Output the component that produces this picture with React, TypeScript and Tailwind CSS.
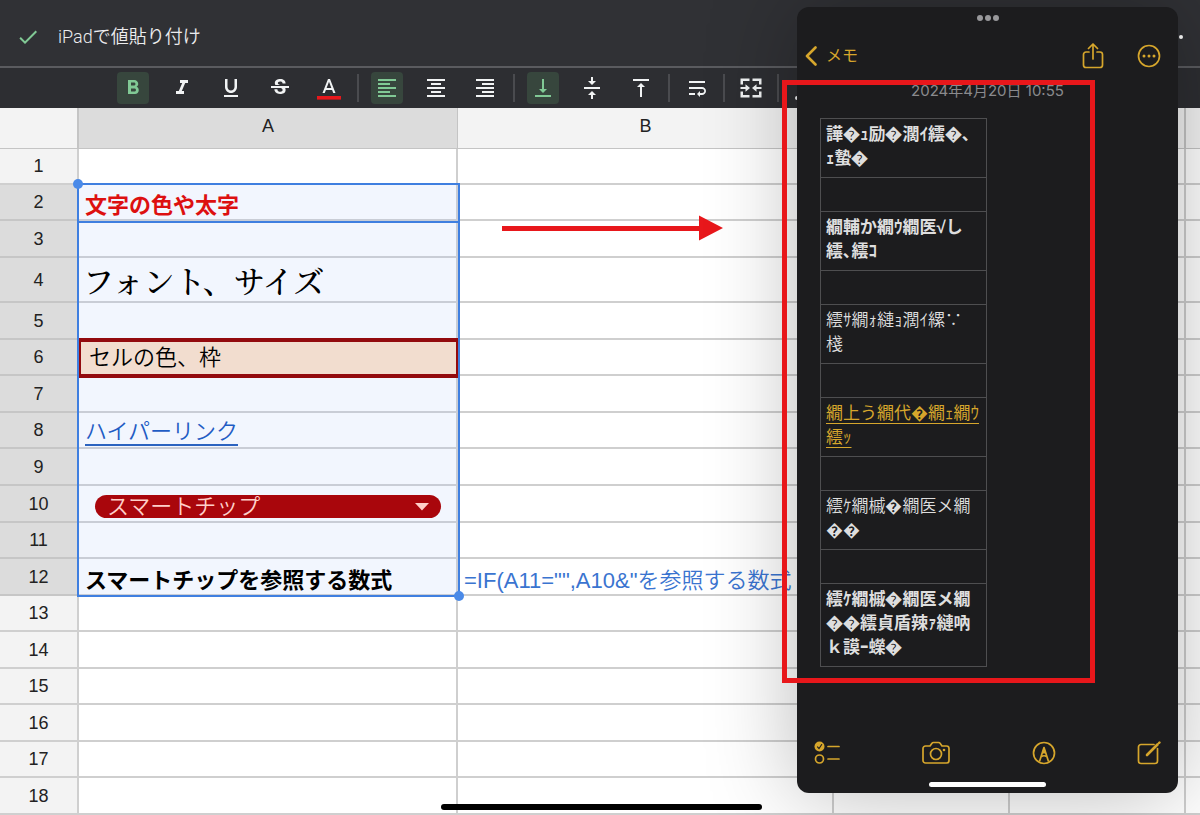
import type { ReactNode } from 'react';
import {
  MdCheck,
  MdFormatAlignCenter,
  MdFormatAlignLeft,
  MdFormatAlignRight,
  MdFormatBold,
  MdFormatItalic,
  MdFormatUnderlined,
  MdStrikethroughS,
  MdVerticalAlignBottom,
  MdVerticalAlignCenter,
  MdVerticalAlignTop,
  MdWrapText,
} from 'react-icons/md';

function ToolButton({ label, active, children }: { label: string; active?: boolean; children: ReactNode }) {
  return (
    <button
      type="button"
      aria-label={label}
      aria-pressed={active ?? false}
      className={
        active
          ? 'flex size-8 shrink-0 items-center justify-center rounded bg-[#37463d] text-[#81c995]'
          : 'flex size-8 shrink-0 items-center justify-center rounded text-[#f1f3f4]'
      }
    >
      {children}
    </button>
  );
}

function TextColorIcon() {
  return (
    <svg width="24" height="24" viewBox="0 0 24 24" fill="currentColor">
      <path d="M11 3 5.500 17h2.250l1.120-3h6.250l1.120 3h2.250L13 3h-2zm-1.380 9L12 5.670 14.380 12H9.620z" />
      <rect x="0" y="20" width="24" height="3.600" fill="#e8171b" />
    </svg>
  );
}

function MergeIcon() {
  return (
    <svg width="24" height="24" viewBox="0 0 24 24" fill="currentColor">
      <path d="M1.500 2.500h9v2.500h-6.500v3.500h-2.500zM22.500 2.500h-9v2.500h6.500v3.500h2.500zM1.500 21.500h9v-2.500h-6.500v-3.500h-2.500zM22.500 21.500h-9v-2.500h6.500v-3.500h2.500z" />
      <path d="M1.500 11h5V8.200l4.500 3.800-4.500 3.800V13h-5zM22.500 11h-5V8.200L13 12l4.500 3.800V13h5z" />
    </svg>
  );
}

function Toolbar() {
  return (
    <div role="toolbar" aria-label="書式" className="flex h-[42px] items-center border-t-2 border-[#5a5b5f] bg-[#2d2e32] pl-[117px]">
      <div className="flex gap-[17px]">
        <ToolButton label="太字" active><MdFormatBold size={24} /></ToolButton>
        <ToolButton label="斜体"><MdFormatItalic size={24} /></ToolButton>
        <ToolButton label="下線"><MdFormatUnderlined size={24} /></ToolButton>
        <ToolButton label="取り消し線"><MdStrikethroughS size={24} /></ToolButton>
        <ToolButton label="文字の色"><TextColorIcon /></ToolButton>
      </div>
      <span className="mx-3 h-7 w-0.5 bg-[#4a4b4f]" />
      <div className="flex gap-[17px]">
        <ToolButton label="左揃え" active><MdFormatAlignLeft size={24} /></ToolButton>
        <ToolButton label="中央揃え"><MdFormatAlignCenter size={24} /></ToolButton>
        <ToolButton label="右揃え"><MdFormatAlignRight size={24} /></ToolButton>
      </div>
      <span className="mx-3 h-7 w-0.5 bg-[#4a4b4f]" />
      <div className="flex gap-[17px]">
        <ToolButton label="下揃え" active><MdVerticalAlignBottom size={24} /></ToolButton>
        <ToolButton label="上下中央揃え"><MdVerticalAlignCenter size={24} /></ToolButton>
        <ToolButton label="上揃え"><MdVerticalAlignTop size={24} /></ToolButton>
      </div>
      <span className="mx-[11px] h-7 w-0.5 bg-[#4a4b4f]" />
      <ToolButton label="折り返し"><MdWrapText size={24} /></ToolButton>
      <span className="mx-[10px] h-7 w-0.5 bg-[#4a4b4f]" />
      <ToolButton label="セルを結合"><MergeIcon /></ToolButton>
      <span className="mx-[10px] h-7 w-0.5 bg-[#4a4b4f]" />
      <span className="mb-2 ml-1.5 size-1 self-end rounded-full bg-[#f1f3f4]" />
    </div>
  );
}

type Row = { n: number; height: string; cell?: ReactNode; formula?: string; framed?: boolean };

const rows: Row[] = [
  { n: 1, height: 'h-[36px]' },
  { n: 2, height: 'h-[36px]', cell: <span className="block pt-2 pl-1.5 text-[22px] leading-[26px] font-bold text-[#dd1010]">文字の色や太字</span> },
  { n: 3, height: 'h-[37px]' },
  {
    n: 4,
    height: 'h-[45px]',
    cell: <span className="block pl-1 font-['Noto_Serif_CJK_JP','Noto_Serif_JP','Noto_Sans_CJK_JP',serif] text-[31px] leading-10 font-medium text-black">フォント、サイズ</span>,
  },
  { n: 5, height: 'h-[37px]' },
  { n: 6, height: 'h-[36px]', framed: true, cell: <span className="block pl-2.5 text-[22px] leading-8 font-[350] text-black">セルの色、枠</span> },
  { n: 7, height: 'h-[37px]' },
  {
    n: 8,
    height: 'h-[36px]',
    cell: (
      <a href="#link" className="mt-1.5 ml-1.5 block w-fit border-b-2 border-[#2b63c0] text-[22px] leading-6 font-[350] text-[#1f5cc4]">
        ハイパーリンク
      </a>
    ),
  },
  { n: 9, height: 'h-[37px]' },
  {
    n: 10,
    height: 'h-[37px]',
    cell: (
      <div className="mt-1.5 mr-[15px] ml-4 grid items-center">
        <select
          aria-label="スマートチップ"
          className="col-start-1 row-start-1 h-[23px] w-full appearance-none rounded-full bg-[#a9060c] pl-3 text-[22px] leading-[22px] font-[350] text-[#ffcfc9]"
        >
          <option>スマートチップ</option>
        </select>
        <svg width="14" height="8" viewBox="0 0 14 8" className="pointer-events-none col-start-1 row-start-1 mr-3 justify-self-end fill-[#ffcfc9]">
          <path d="M0 0h14L7 7.500z" />
        </svg>
      </div>
    ),
  },
  { n: 11, height: 'h-[36px]' },
  {
    n: 12,
    height: 'h-[37px]',
    cell: <span className="block pt-2 pl-1.5 text-[22px] leading-[26px] font-bold text-black">スマートチップを参照する数式</span>,
    formula: '=IF(A11="",A10&"を参照する数式',
  },
  { n: 13, height: 'h-[36px]' },
  { n: 14, height: 'h-[37px]' },
  { n: 15, height: 'h-[36px]' },
  { n: 16, height: 'h-[37px]' },
  { n: 17, height: 'h-[36px]' },
  { n: 18, height: 'h-[37px]' },
];

function Sheet() {
  return (
    <div className="relative">
      <table className="w-full table-fixed border-separate border-spacing-0 bg-white">
        <colgroup>
          <col className="w-[79px]" />
          <col className="w-[379px]" />
          <col className="w-[376px]" />
          <col className="w-[176px]" />
          <col className="w-[176px]" />
          <col />
        </colgroup>
        <thead>
          <tr className="h-[41px] text-lg leading-5 text-[#222]">
            <td className="border-r-2 border-b border-[#c4c4c4] bg-[#f3f3f3] p-0" />
            <th scope="col" className="border-r border-b border-[#c4c4c4] bg-[#dcdcdc] p-0 pb-1 font-normal">A</th>
            <th scope="col" className="border-r border-b border-[#c4c4c4] bg-[#f3f3f3] p-0 pb-1 font-normal">B</th>
            <td className="border-r border-b border-[#c4c4c4] bg-[#f3f3f3] p-0" />
            <td className="border-r-2 border-b border-[#c4c4c4] bg-[#f3f3f3] p-0" />
            <td className="border-b border-[#c4c4c4] bg-[#f3f3f3] p-0" />
          </tr>
        </thead>
        <tbody>
          {rows.map((row) => {
            const selected = row.n >= 2 && row.n <= 12;
            return (
              <tr key={row.n} className={row.height}>
                <th
                  scope="row"
                  className={
                    selected
                      ? 'border-r-2 border-b-2 border-[#c6c6c6] bg-[#dcdcdc] p-0 text-lg leading-5 font-normal text-[#222]'
                      : 'border-r-2 border-b-2 border-[#cfcfcf] bg-[#f3f3f3] p-0 text-lg leading-5 font-normal text-[#222]'
                  }
                >
                  {row.n}
                </th>
                <td
                  className={
                    row.framed
                      ? 'bg-[#f2ddcf] p-0 outline-4 -outline-offset-2 outline-[#930a0e]'
                      : selected
                        ? 'border-r-2 border-b-2 border-[#c9cdd6] bg-[#f2f6fe] p-0'
                        : 'border-r-2 border-b-2 border-[#cfcfcf] p-0'
                  }
                >
                  {row.cell}
                </td>
                <td className="border-r-2 border-b-2 border-[#cfcfcf] p-0">
                  {row.formula && (
                    <span className="block overflow-hidden pt-2 pl-1.5 text-[22px] leading-[26px] font-[350] whitespace-nowrap text-[#3a74d0]">{row.formula}</span>
                  )}
                </td>
                <td className="border-r-2 border-b-2 border-[#cfcfcf] p-0" />
                <td className="border-r-2 border-b-2 border-[#cfcfcf] p-0" />
                <td className="border-b-2 border-[#cfcfcf] p-0" />
              </tr>
            );
          })}
        </tbody>
      </table>
      <div className="pointer-events-none absolute top-[75px] left-[77px] h-[414px] w-[383px] border-2 border-[#3f7fe0]">
        <div className="h-[38px] border-b-2 border-[#3f7fe0]" />
        <span className="absolute -top-1.5 -left-1.5 size-2.5 rounded-full bg-[#4a8ae8]" />
        <span className="absolute -right-1.5 -bottom-1.5 size-2.5 rounded-full bg-[#4a8ae8]" />
      </div>
    </div>
  );
}

const notes: { lines: string[]; style: string; link?: boolean }[] = [
  { lines: ['譁�ｭ励�濶ｲ繧�､', 'ｪ蟄�'], style: 'font-bold' },
  { lines: ['繝輔か繝ｳ繝医√し', '繧､繧ｺ'], style: 'font-bold' },
  { lines: ['繧ｻ繝ｫ縺ｮ濶ｲ縲∵', '棧'], style: 'font-[350]' },
  { lines: ['繝上う繝代�繝ｪ繝ｳ', '繧ｯ'], style: 'font-normal', link: true },
  { lines: ['繧ｹ繝槭�繝医メ繝', '��'], style: 'font-[350]' },
  { lines: ['繧ｹ繝槭�繝医メ繝', '��繧貞盾辣ｧ縺吶', 'ｋ謨ｰ蠑�'], style: 'font-bold' },
];

function NoteTable() {
  return (
    <table className="ml-[23px] w-[167px] border-collapse text-[17px] leading-6 text-[#dedede]">
      <tbody>
        {notes.map((note, i) => {
          const text = note.lines.map((line) => <span key={line} className="block whitespace-nowrap">{line}</span>);
          return [
            i > 0 && (
              <tr key={`gap-${i}`} className="h-[34px]">
                <td className="border border-[#4e4e50]" />
              </tr>
            ),
            <tr key={`note-${i}`}>
              <td className="border border-[#4e4e50] px-[5px] pt-1 pb-1.5 last:pb-1.5">
                {note.link ? (
                  <a href="#note" className="block text-[#d6a62c] underline decoration-1 underline-offset-4">{text}</a>
                ) : (
                  <div className={note.style}>{text}</div>
                )}
              </td>
            </tr>,
          ];
        })}
      </tbody>
    </table>
  );
}

function NotesWindow() {
  return (
    <section
      aria-label="メモ"
      className="absolute top-[7px] left-[797px] flex h-[786px] w-[381px] flex-col rounded-xl bg-[#1c1c1e] shadow-[0_0_90px_rgba(0,0,0,0.28)]"
    >
      <button type="button" aria-label="マルチタスク" className="mx-auto mt-[7px] flex h-2 items-center gap-0.5">
        <span className="size-1.5 rounded-full bg-[#98989b]" />
        <span className="size-1.5 rounded-full bg-[#98989b]" />
        <span className="size-1.5 rounded-full bg-[#98989b]" />
      </button>
      <header className="mt-4 flex h-9 items-center pr-[17px] pl-2 text-[#d6a62c]">
        <button type="button" className="flex items-center gap-2 text-base">
          <svg width="13" height="20" viewBox="0 0 13 20" fill="none" stroke="currentColor" strokeWidth="2.600" strokeLinecap="round" strokeLinejoin="round">
            <path d="M10.500 1.500 2 10l8.500 8.500" />
          </svg>
          メモ
        </button>
        <button type="button" aria-label="共有" className="ml-auto">
          <svg width="22" height="26" viewBox="0 0 22 26" fill="none" stroke="currentColor" strokeWidth="1.700" strokeLinecap="round" strokeLinejoin="round">
            <path d="M7 9H4a2.500 2.500 0 0 0-2.500 2.500v10.500A2.500 2.500 0 0 0 4 24.500h14a2.500 2.500 0 0 0 2.500-2.500V11.500A2.500 2.500 0 0 0 18 9h-3M11 16V1.500M6.500 5.500 11 1l4.500 4.500" />
          </svg>
        </button>
        <button type="button" aria-label="その他" className="ml-[33px]">
          <svg width="24" height="24" viewBox="0 0 24 24" fill="none" stroke="currentColor" strokeWidth="1.700">
            <circle cx="12" cy="12" r="10.500" />
            <g fill="currentColor" stroke="none">
              <circle cx="7" cy="12" r="1.500" />
              <circle cx="12" cy="12" r="1.500" />
              <circle cx="17" cy="12" r="1.500" />
            </g>
          </svg>
        </button>
      </header>
      <p className="mt-1.5 mb-4 text-center font-['Inter','Noto_Sans_CJK_JP',sans-serif] text-[15px] leading-[22px] text-[#8a8a8d]">2024年4月20日 10:55</p>
      <NoteTable />
      <footer className="mt-auto flex items-center justify-between px-[17px] text-[#d6a62c]">
        <button type="button" aria-label="チェックリスト">
          <svg width="27" height="24" viewBox="0 0 27 24" fill="none" stroke="currentColor" strokeWidth="1.700" strokeLinecap="round">
            <circle cx="5.500" cy="5.500" r="5" fill="currentColor" stroke="none" />
            <path d="m3.500 5.800 1.500 1.700 2.700-4" stroke="#1c1c1e" strokeWidth="1.100" />
            <circle cx="5.500" cy="18" r="4" />
            <path d="M14 5.500h11M14 18h11" />
          </svg>
        </button>
        <button type="button" aria-label="カメラ">
          <svg width="28" height="24" viewBox="0 0 28 24" fill="none" stroke="currentColor" strokeWidth="1.700" strokeLinejoin="round">
            <path d="M3.500 5H8l1.800-2.600c.4-.6.900-.9 1.700-.9h5c.8 0 1.300.3 1.700.9L20 5h4.500A2.500 2.500 0 0 1 27 7.500v12a2.500 2.500 0 0 1-2.500 2.500h-21A2.500 2.500 0 0 1 1 19.500v-12A2.500 2.500 0 0 1 3.500 5z" />
            <circle cx="14" cy="13" r="5.500" />
            <circle cx="22" cy="9" r="1.300" fill="currentColor" stroke="none" />
          </svg>
        </button>
        <button type="button" aria-label="マークアップ">
          <svg width="24" height="24" viewBox="0 0 24 24" fill="none" stroke="currentColor" strokeWidth="1.700" strokeLinejoin="round">
            <circle cx="12" cy="12" r="10.500" />
            <path d="m7.500 20.500 3.500-11 1-3 1 3 3.500 11M9.500 15.500q2.500-1.500 5 0" />
            <path d="m12 5.500 2.200 7h-4.400z" fill="currentColor" stroke="none" />
          </svg>
        </button>
        <button type="button" aria-label="新規メモ">
          <svg width="24" height="24" viewBox="0 0 24 24" fill="none" stroke="currentColor" strokeWidth="1.700" strokeLinecap="round" strokeLinejoin="round">
            <path d="M17 3.500H4A2.500 2.500 0 0 0 1.500 6v14A2.500 2.500 0 0 0 4 22.500h14a2.500 2.500 0 0 0 2.500-2.500V7.500" />
            <path d="m10 14 10.500-10.500" strokeWidth="2.600" />
            <path d="m22 2 .5-.5" strokeWidth="2.400" />
          </svg>
        </button>
      </footer>
      <div className="mx-auto mt-[17px] mb-1.5 h-[5px] w-[117px] rounded-full bg-white" />
    </section>
  );
}

export default function App() {
  return (
    <main className="relative h-screen overflow-hidden bg-white font-['Liberation_Sans','Noto_Sans_CJK_JP',sans-serif]">
      <header className="flex h-[66px] items-center gap-[18px] bg-[#303135] pt-2 pl-4 text-[#ececee]">
        <button type="button" aria-label="完了" className="text-[#81c995]">
          <MdCheck size={24} />
        </button>
        <h1 className="font-['Roboto','Noto_Sans_CJK_JP',sans-serif] text-lg font-[350]">iPadで値貼り付け</h1>
        <span className="mr-[17px] ml-auto size-1 rounded-full bg-white" />
      </header>
      <Toolbar />
      <Sheet />
      <svg width="222" height="26" viewBox="0 0 222 26" className="absolute top-[215px] left-[502px]" fill="#e8171b">
        <path d="M0 11h197V0.500L221 13l-24 12.500V16H0z" />
      </svg>
      <div className="absolute top-[804px] left-[441px] h-[6px] w-[321px] rounded-full bg-black" />
      <NotesWindow />
      <div className="pointer-events-none absolute top-20 left-[782px] h-[603px] w-[313px] border-5 border-[#e8171b]" />
    </main>
  );
}
